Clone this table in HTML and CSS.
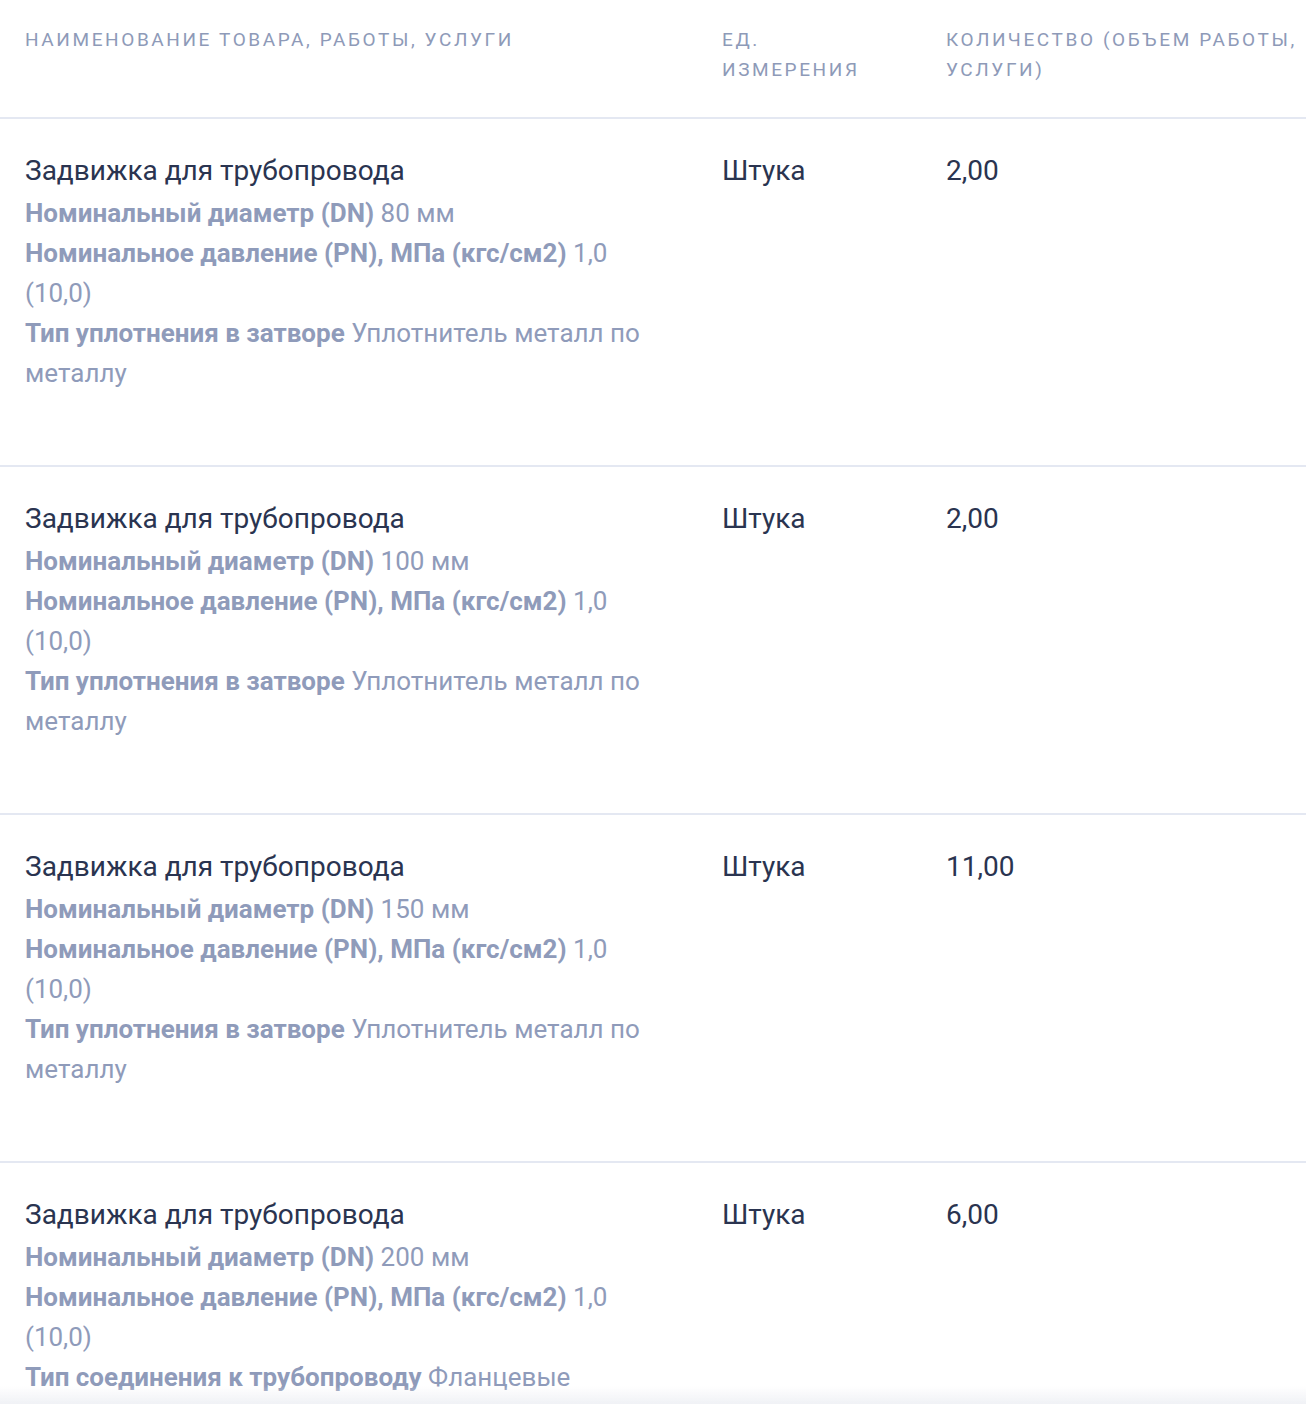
FILE: index.html
```html
<!DOCTYPE html>
<html lang="ru">
<head>
<meta charset="utf-8">
<link rel="stylesheet" href="styles.css">
</head>
<body>
<div class="table">
  <div class="row head">
    <div class="cell name">Наименование товара, работы, услуги</div>
    <div class="cell unit">Ед. измерения</div>
    <div class="cell qty">Количество (объем работы, услуги)</div>
  </div>

  <div class="row item">
    <div class="cell name">
      <div class="title">Задвижка для трубопровода</div>
      <div class="attr"><b>Номинальный диаметр (DN)</b> 80 мм</div>
      <div class="attr"><b>Номинальное давление (PN), МПа (кгс/см2)</b> 1,0 (10,0)</div>
      <div class="attr"><b>Тип уплотнения в затворе</b> Уплотнитель металл по металлу</div>
    </div>
    <div class="cell unit">Штука</div>
    <div class="cell qty">2,00</div>
  </div>

  <div class="row item">
    <div class="cell name">
      <div class="title">Задвижка для трубопровода</div>
      <div class="attr"><b>Номинальный диаметр (DN)</b> 100 мм</div>
      <div class="attr"><b>Номинальное давление (PN), МПа (кгс/см2)</b> 1,0 (10,0)</div>
      <div class="attr"><b>Тип уплотнения в затворе</b> Уплотнитель металл по металлу</div>
    </div>
    <div class="cell unit">Штука</div>
    <div class="cell qty">2,00</div>
  </div>

  <div class="row item">
    <div class="cell name">
      <div class="title">Задвижка для трубопровода</div>
      <div class="attr"><b>Номинальный диаметр (DN)</b> 150 мм</div>
      <div class="attr"><b>Номинальное давление (PN), МПа (кгс/см2)</b> 1,0 (10,0)</div>
      <div class="attr"><b>Тип уплотнения в затворе</b> Уплотнитель металл по металлу</div>
    </div>
    <div class="cell unit">Штука</div>
    <div class="cell qty">11,00</div>
  </div>

  <div class="row item">
    <div class="cell name">
      <div class="title">Задвижка для трубопровода</div>
      <div class="attr"><b>Номинальный диаметр (DN)</b> 200 мм</div>
      <div class="attr"><b>Номинальное давление (PN), МПа (кгс/см2)</b> 1,0 (10,0)</div>
      <div class="attr"><b>Тип соединения к трубопроводу</b> Фланцевые</div>
      <div class="attr"><b>Тип уплотнения в затворе</b> Уплотнитель металл по металлу</div>
    </div>
    <div class="cell unit">Штука</div>
    <div class="cell qty">6,00</div>
  </div>
</div>
<div class="fade"></div>
</body>
</html>
```

FILE: styles.css
```css
html, body {
  margin: 0;
  padding: 0;
  background: #ffffff;
  font-family: Roboto, "Noto Sans", "Liberation Sans", sans-serif;
  overflow: hidden;
}

.table {
  display: flex;
  flex-direction: column;
}

.row {
  display: grid;
  grid-template-columns: 697px 224px 1fr;
  padding-left: 25px;
  border-bottom: 2px solid #e4e8f2;
}

.cell.name {
  padding-right: 57px;
}

.head {
  padding-top: 25px;
  padding-bottom: 32px;
  font-size: 19px;
  line-height: 30px;
  letter-spacing: 2.6px;
  text-transform: uppercase;
  color: #8e9ab8;
}

.head .unit {
  padding-right: 60px;
}

.item {
  padding-top: 30px;
  padding-bottom: 72px;
  font-size: 28px;
  color: #2a3450;
}

.title {
  line-height: 44px;
}

.attr {
  font-size: 26px;
  line-height: 40px;
  color: #8f9bba;
}

.attr b {
  font-weight: 700;
}

.item .unit,
.item .qty {
  line-height: 44px;
}

.fade {
  position: fixed;
  left: 0;
  right: 0;
  bottom: 0;
  height: 18px;
  background: linear-gradient(to bottom, rgba(240, 241, 245, 0), rgba(236, 238, 243, 0.8));
  pointer-events: none;
}
```
